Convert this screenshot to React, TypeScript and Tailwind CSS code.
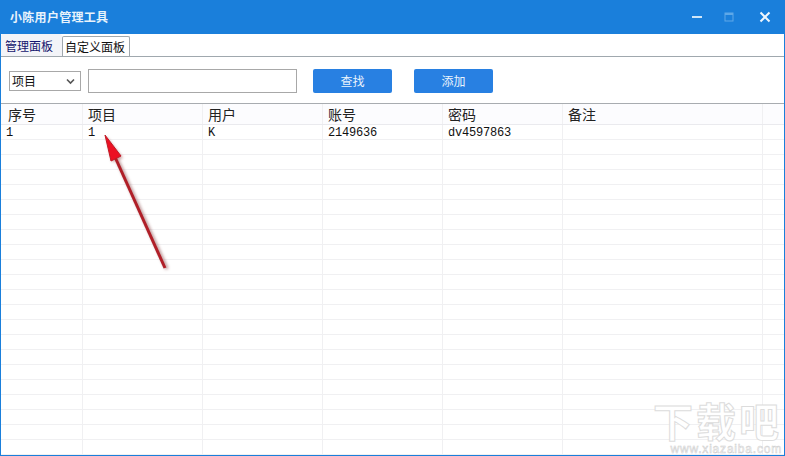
const cols = [
  { w: 'w-[82px]', p: 'pl-[7px]', h: '序号', v: '1' },
  { w: 'w-[120px]', p: 'pl-[5px]', h: '项目', v: '1' },
  { w: 'w-[120px]', p: 'pl-[5px]', h: '用户', v: 'K' },
  { w: 'w-[120px]', p: 'pl-[5px]', h: '账号', v: '2149636' },
  { w: 'w-[120px]', p: 'pl-[5px]', h: '密码', v: 'dv4597863' },
  { w: 'w-[200px]', p: 'pl-[5px]', h: '备注', v: '' },
];
const rows = Array.from({ length: 22 }, (_, i) => i);

export default function App() {
  return (
    <div className="relative flex h-[456px] w-[785px] flex-col overflow-hidden border-x border-b border-[#1a7fdb] bg-white font-['Noto_Sans_CJK_SC',sans-serif]">
      <div className="-mx-px flex h-[34px] shrink-0 items-center justify-between bg-[#1a7fdb] pl-[10px] pr-[14px]">
        <span className="text-[12px] font-bold tracking-[0.3px] text-[#e8f3fc]">小陈用户管理工具</span>
        <div className="-mt-[1px] flex items-center">
          <svg width="12" height="12" viewBox="0 0 12 12"><rect x="1" y="5" width="10" height="2" fill="#cfe6f8" /></svg>
          <svg className="ml-[20px]" width="12" height="12" viewBox="0 0 12 12"><rect x="2" y="2" width="8" height="8" fill="none" stroke="#5ea8e8" strokeWidth="1" /><rect x="2" y="2" width="8" height="2" fill="#5ea8e8" /></svg>
          <svg className="ml-[24px]" width="12" height="12" viewBox="0 0 12 12"><path d="M1.5 1.5 L10.5 10.5 M10.5 1.5 L1.5 10.5" stroke="#eef6fd" strokeWidth="2" fill="none" /></svg>
        </div>
      </div>

      <div className="flex h-[23px] shrink-0 items-end border-b border-[#a0a8ae]">
        <div className="flex h-[22px] w-[61px] items-center rounded-t-[2px] bg-[#f3f4f8] pl-[4px] pt-[1px] text-[12px] text-[#14146e]">管理面板</div>
        <div className="flex h-[20px] w-[68px] items-center rounded-t-[2px] border-x border-t border-[#a0a8ae] pl-[2px] pt-[1px] text-[12px] text-[#111]">自定义面板</div>
      </div>

      <div className="flex h-[47px] shrink-0 items-center border-b border-[#a8acb0] pl-[8px] pt-[2px]">
        <div className="flex h-[20px] w-[72px] items-center justify-between border border-[#a8a8a8] pl-[2px] pr-[5px] text-[12px] text-[#111]">
          <span>项目</span>
          <svg width="9" height="7" viewBox="0 0 9 7"><path d="M1 1.5 L4.5 5 L8 1.5" stroke="#555" strokeWidth="1.6" fill="none" /></svg>
        </div>
        <div className="ml-[7px] h-[24px] w-[209px] border border-[#a8a8a8]" />
        <button className="ml-[16px] h-[24px] w-[79px] rounded-[2px] bg-[#2880e2] text-[12px] text-[#e8f3fc]">查找</button>
        <button className="ml-[22px] h-[24px] w-[79px] rounded-[2px] bg-[#2880e2] text-[12px] text-[#e8f3fc]">添加</button>
      </div>

      <div className="flex h-[21px] shrink-0 border-b border-[#eaeaee] bg-[#fcfcfe]">
        {cols.map((c) => (
          <div key={c.h} className={`${c.w} ${c.p} shrink-0 border-r border-[#f0f0f2] text-[14px] leading-[20px] text-[#222]`}>{c.h}</div>
        ))}
      </div>

      <div className="flex-1 overflow-hidden">
        {rows.map((i) => (
          <div key={i} className="flex h-[15px] border-b border-[#f0f0f2]">
            {cols.map((c) => (
              <div key={c.h} className={`${c.w} shrink-0 border-r border-[#f0f0f2] pl-[5px] font-['Liberation_Mono',monospace] text-[12px] leading-[16px] tracking-[-0.2px] text-[#111]`}>{i === 0 ? c.v : ''}</div>
            ))}
          </div>
        ))}
      </div>

      <svg className="absolute left-0 top-0" width="785" height="456" viewBox="0 0 785 456">
        <defs>
          <filter id="s" x="-50%" y="-20%" width="200%" height="140%">
            <feGaussianBlur stdDeviation="1.6" />
          </filter>
        </defs>
        <g filter="url(#s)" opacity="0.55" transform="translate(2 1)">
          <path d="M114 158 L164 268" stroke="#8a4a4a" strokeWidth="3.5" fill="none" />
          <path d="M103 135 L120 157 L109 161 Z" fill="#a05050" />
        </g>
        <path d="M114 157 L164 268" stroke="#b01f28" strokeWidth="3" fill="none" />
        <path d="M104 135 L120 156 L110 161 Z" fill="#ec1022" stroke="#c01a26" strokeWidth="1" />
      </svg>

      <div className="absolute bottom-0 right-[2px] flex flex-col items-end">
        <span className="mb-[3px] text-[40px] font-bold leading-[40px] tracking-[3px] text-white [-webkit-text-stroke:1px_#dcdcdc]">下载吧</span>
        <span className="font-['Liberation_Sans',sans-serif] text-[12px] leading-[12px] tracking-[0.8px] text-white [-webkit-text-stroke:0.5px_#cccccc]">www.xiazaiba.com</span>
      </div>
    </div>
  );
}
